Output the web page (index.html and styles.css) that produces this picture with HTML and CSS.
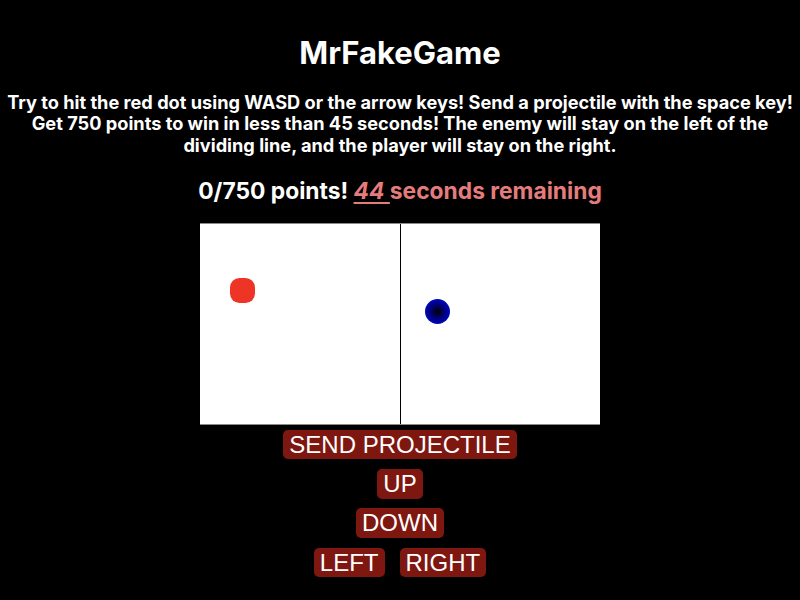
FILE: index.html
```html
<!DOCTYPE html>
<html>
<head>
<meta charset="utf-8">
<title>MrFakeGame</title>
<link rel="stylesheet" href="styles.css">
</head>
<body>
<main class="page">
  <h1 class="title">MrFakeGame</h1>
  <p class="intro">Try to hit the red dot using WASD or the arrow keys! Send a projectile with the space key! Get 750 points to win in less than 45 seconds! The enemy will stay on the left of the dividing line, and the player will stay on the right.</p>
  <p class="score">0/750 points! <span class="timer"><a class="secs">44 </a>seconds remaining</span></p>
  <div class="field">
    <div class="half left-half">
      <div class="enemy"></div>
    </div>
    <div class="half right-half">
      <div class="player"></div>
    </div>
  </div>
  <div class="controls">
    <button class="btn">SEND PROJECTILE</button>
    <button class="btn">UP</button>
    <button class="btn">DOWN</button>
    <div class="row">
      <button class="btn">LEFT</button>
      <button class="btn">RIGHT</button>
    </div>
  </div>
</main>
</body>
</html>
```
FILE: styles.css
```css
html, body {
  margin: 0;
  padding: 0;
  background: #000;
}
body {
  color: #fff;
  font-family: Inter, "Noto Sans", sans-serif;
  overflow: hidden;
}
.page {
  display: flex;
  flex-direction: column;
  align-items: center;
  text-align: center;
  padding-top: 34px;
}
.title {
  margin: 0;
  font-size: 31px;
  font-weight: 700;
  line-height: 38.7px;
}
.intro {
  margin: 19px 0 0;
  padding: 0 2px;
  font-size: 18.2px;
  font-weight: 700;
  line-height: 21.5px;
}
.score {
  margin: 22px 0 0;
  font-size: 22.8px;
  font-weight: 700;
  line-height: 26.6px;
}
.timer {
  color: #e57c7c;
}
.secs {
  font-style: italic;
  text-decoration: underline;
  text-decoration-thickness: 2px;
  text-underline-offset: 3px;
}
.field {
  margin-top: 19px;
  width: 400px;
  height: 200px;
  display: flex;
  background: #fff;
  box-shadow: 0 -1px 0 #8a8a8a, 0 1px 0 #8a8a8a;
}
.half {
  position: relative;
  flex: 1;
}
.left-half {
  border-right: 1px solid #000;
}
.enemy {
  position: absolute;
  left: 29.5px;
  top: 54px;
  width: 25px;
  height: 25px;
  border-radius: 9.5px;
  background: #ee3425;
}
.player {
  position: absolute;
  left: 24px;
  top: 75px;
  width: 25px;
  height: 25px;
  border-radius: 50%;
  background: radial-gradient(circle, #000 0%, #000040 20%, #0000a0 55%, #0010d0 85%, #2a3ae0 100%);
}
.controls {
  margin-top: 6px;
  display: flex;
  flex-direction: column;
  align-items: center;
  gap: 9.7px;
}
.row {
  display: flex;
  gap: 15px;
}
.btn {
  font-family: "Liberation Sans", Arial, sans-serif;
  font-size: 24px;
  line-height: 27.6px;
  color: #fff;
  background: #7e1710;
  border: none;
  border-radius: 5px;
  padding: 1px 6px;
  margin: 0;
}
```
